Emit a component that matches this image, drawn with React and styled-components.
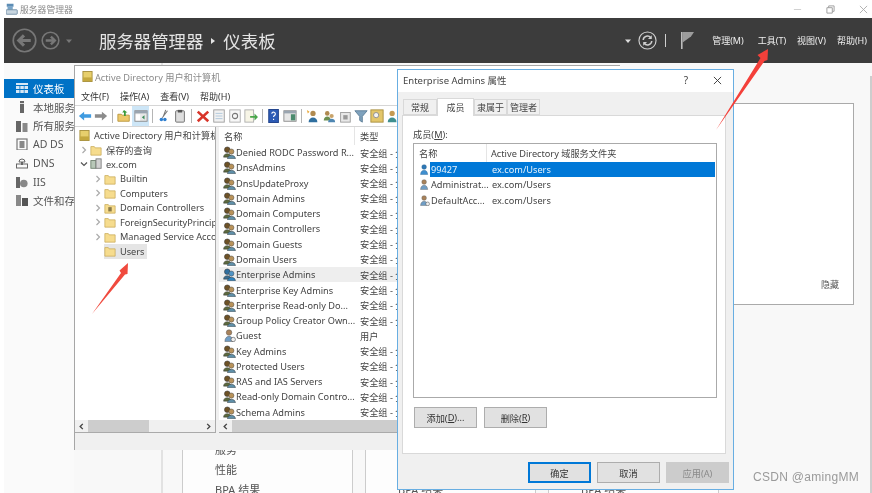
import React from 'react';
import styled, { createGlobalStyle } from 'styled-components';

const GlobalStyle = createGlobalStyle`
    html, body {
        margin: 0;
        padding: 0;
        background: #fff;
    }
    * {
        box-sizing: border-box;
    }
`;

const Page = styled.div`
    position: relative;
    width: 872px;
    height: 493px;
    overflow: hidden;
    background: #fff;
    color: #333;
    font-family: "Noto Sans", "Noto Sans CJK SC", sans-serif;
    font-size: 9.2px;
    filter: blur(0.45px);
`;

const TitleBar = styled.div`
    display: flex;
    align-items: center;
    height: 18px;
    padding: 0 4px 0 6px;
    color: #8a8a8a;
    font-size: 8.8px;
    gap: 2px;
`;

const WindowControls = styled.div`
    display: flex;
    align-items: center;
    margin-left: auto;
    gap: 24px;
`;

const Header = styled.div`
    display: flex;
    align-items: center;
    height: 45px;
    margin-left: 4px;
    padding: 0 5px 0 8px;
    background: #3c3c3c;
    color: #e6e6e6;
`;

const ForwardSlot = styled.span`
    display: flex;
    margin-left: 4px;
`;

const CaretSlot = styled.span`
    display: flex;
    margin-left: 6px;
`;

const HeaderTitle = styled.div`
    display: flex;
    align-items: center;
    margin-left: 27px;
    font-size: 17.4px;
    color: #e4e4e4;
`;

const TitleCaret = styled.span`
    width: 0;
    height: 0;
    margin: 0 8px;
    border-left: 4px solid #e4e4e4;
    border-top: 3px solid transparent;
    border-bottom: 3px solid transparent;
`;

const HeaderTools = styled.div`
    display: flex;
    align-items: center;
    margin-left: auto;
`;

const RefreshSlot = styled.span`
    display: flex;
    margin-left: 7px;
`;

const ToolSeparator = styled.span`
    width: 1px;
    height: 13px;
    margin: 0 14px 0 8px;
    background: #cfcfcf;
`;

const HeaderMenu = styled.div`
    display: flex;
    gap: 11px;
    margin-left: 15px;
    font-size: 9px;
    color: #eee;
`;

const HeaderMenuItem = styled.span`
    margin-right: ${props => props.$extra || 0}px;
`;

const Body = styled.div`
    display: flex;
    height: 430px;
    margin-left: 4px;
    background: #f8f8f8;
`;

const Sidebar = styled.nav`
    width: 70px;
    flex: none;
    padding-top: 16px;
    background: #fafafa;
    white-space: nowrap;
`;

const NavItem = styled.div`
    display: flex;
    align-items: center;
    height: 18.7px;
    padding-left: 12px;
    gap: 5px;
    font-size: 10.5px;
    background: ${props => (props.$active ? '#0072c6' : 'transparent')};
    color: ${props => (props.$active ? '#fff' : '#555')};
`;

const Main = styled.div`
    flex: 1;
    padding-left: 87px;
`;

const Content = styled.div`
    height: 100%;
    padding-top: 40px;
    border-left: 2px solid #e2e2e2;
`;

const WelcomePanel = styled.div`
    display: flex;
    justify-content: flex-end;
    align-items: flex-end;
    height: 202px;
    margin-right: 16px;
    padding: 0 14px 13px 0;
    background: #fff;
    border: 1px solid #aaa;
    font-size: 9px;
    color: #555;
`;

const TileRow = styled.div`
    display: flex;
    gap: 12px;
    margin-top: 125px;
    padding-left: 19px;
`;

const Tile = styled.div`
    width: 171px;
    height: 80px;
    padding: 10px 0 0 32px;
    background: #fdfdfd;
    border-left: 1px solid #ccc;
    border-right: 1px solid #ccc;
    font-size: 11px;
    line-height: 20px;
    color: #555;
`;

const PageScroll = styled.div`
    width: 2px;
    flex: none;
    margin-top: 13px;
    background: #cdcdcd;
`;

// floating windows
const AdWindow = styled.div`
    position: absolute;
    left: 74px;
    top: 65px;
    width: 546px;
    height: 385px;
    display: flex;
    flex-direction: column;
    background: #f0f0f0;
    border-top: 1px solid #a6a6a6;
    border-left: 1px solid #a6a6a6;
`;

const AdTitle = styled.div`
    display: flex;
    align-items: center;
    height: 21px;
    flex: none;
    padding-left: 7px;
    gap: 2px;
    background: #fff;
    color: #8a8a8a;
    font-size: 9.2px;
`;

const AdMenu = styled.div`
    display: flex;
    align-items: center;
    height: 18px;
    flex: none;
    padding-left: 6px;
    gap: 11px;
    background: #fff;
    font-size: 9px;
    color: #333;
`;

const Toolbar = styled.div`
    display: flex;
    align-items: center;
    height: 22px;
    flex: none;
    padding-left: 2px;
    background: #fff;
    border-top: 1px solid #d6d6d6;
    border-bottom: 1px solid #d6d6d6;
`;

const ToolButton = styled.span`
    display: flex;
    align-items: center;
    justify-content: center;
    width: ${props => (props.$active ? '17px' : '16px')};
    height: 20px;
    flex: none;
    background: ${props => (props.$active ? '#cde6f7' : 'transparent')};
`;

const ToolGap = styled.span`
    width: 1px;
    height: 14px;
    flex: none;
    margin: 0 3px;
    background: #b5b5b5;
`;

const Panes = styled.div`
    display: flex;
    height: 306px;
    flex: none;
    gap: 3px;
    background: #f0f0f0;
`;

const Pane = styled.div`
    display: flex;
    flex-direction: column;
    width: ${props => props.$width};
    flex: ${props => (props.$width ? 'none' : 1)};
    background: #fff;
    border-right: 1px solid #aaa;
    border-bottom: 1px solid #aaa;
    overflow: hidden;
`;

const PaneBody = styled.div`
    flex: 1;
    overflow: hidden;
    white-space: nowrap;
    padding-top: ${props => props.$top || 0}px;
`;

const TreeRow = styled.div`
    display: flex;
    align-items: center;
    height: 14.5px;
    padding-left: ${props => props.$indent}px;
    color: #444;
`;

const TreeChevron = styled.span`
    display: flex;
    width: 12px;
    flex: none;
    justify-content: center;
`;

const TreeLabel = styled.span`
    display: flex;
    align-items: center;
    height: 14.5px;
    gap: 4px;
    padding: 0 2px 0 0;
    background: ${props => (props.$selected ? '#e5e5e5' : 'transparent')};
`;

const ListHeader = styled.div`
    display: flex;
    align-items: center;
    height: 18px;
    flex: none;
    color: #444;
`;

const ListHeadCell = styled.span`
    display: flex;
    align-items: center;
    height: 18px;
    width: ${props => props.$width};
    padding-left: 5px;
    border-right: ${props => (props.$line ? '1px solid #e5e5e5' : 'none')};
`;

const ListRow = styled.div`
    display: flex;
    align-items: center;
    height: 15.27px;
    background: ${props => (props.$hover ? '#eeeeee' : 'transparent')};
    color: #444;
`;

const NameCell = styled.span`
    display: flex;
    align-items: center;
    width: 136px;
    flex: none;
    padding-left: 4px;
`;

const TypeCell = styled.span`
    padding-left: 5px;
`;

const ScrollTrack = styled.div`
    display: flex;
    align-items: center;
    height: 12px;
    flex: none;
    background: #f0f0f0;
`;

const ScrollArrow = styled.span`
    display: flex;
    justify-content: center;
    width: 13px;
    flex: none;
`;

const ScrollThumb = styled.span`
    height: 12px;
    background: #cdcdcd;
    flex: ${props => (props.$grow ? 1 : 'none')};
    width: ${props => props.$width};
`;

const ScrollSpace = styled.span`
    flex: 1;
`;

const Dialog = styled.div`
    position: absolute;
    left: 397px;
    top: 69px;
    width: 337px;
    height: 421px;
    display: flex;
    flex-direction: column;
    background: #f0f0f0;
    border: 1px solid #68aee2;
`;

const DialogTitle = styled.div`
    display: flex;
    align-items: center;
    height: 22px;
    flex: none;
    padding: 0 11px 2px 5px;
    background: #fff;
    font-size: 9.5px;
    color: #444;
`;

const DialogHelp = styled.span`
    margin-left: auto;
    margin-right: 25px;
    font-size: 10px;
`;

const TabStrip = styled.div`
    display: flex;
    align-items: flex-end;
    height: 23px;
    flex: none;
    padding-left: 5px;
`;

const Tab = styled.div`
    display: flex;
    align-items: center;
    justify-content: center;
    width: ${props => props.$width}px;
    height: ${props => (props.$active ? 18 : 16)}px;
    margin-bottom: ${props => (props.$active ? -1 : 0)}px;
    position: relative;
    background: ${props => (props.$active ? '#fff' : '#f0f0f0')};
    border: 1px solid #d9d9d9;
    border-bottom: ${props => (props.$active ? 'none' : '1px solid #d9d9d9')};
    font-size: 9px;
    color: #444;
`;

const TabPage = styled.div`
    display: flex;
    flex-direction: column;
    height: 339px;
    flex: none;
    margin: 0 7px 0 4px;
    padding: 11px 8px 0 10px;
    background: #fff;
    border: 1px solid #d9d9d9;
`;

const FieldLabel = styled.div`
    height: 16px;
    font-size: 9.2px;
    color: #444;
`;

const MemberList = styled.div`
    height: 255px;
    flex: none;
    padding: 0 1px;
    background: #fff;
    border: 1px solid #aaa;
    color: #444;
`;

const MemberHeader = styled.div`
    display: flex;
    align-items: center;
    height: 18px;
`;

const MemberHeadCell = styled.span`
    display: flex;
    align-items: center;
    height: 18px;
    width: ${props => props.$width};
    padding-left: ${props => props.$pad}px;
    border-right: ${props => (props.$line ? '1px solid #e5e5e5' : 'none')};
`;

const MemberRow = styled.div`
    display: flex;
    align-items: center;
    height: 15.3px;
    padding-left: 4px;
`;

const MemberName = styled.span`
    display: flex;
    align-items: center;
    width: 68px;
    flex: none;
    height: 15.3px;
`;

const MemberText = styled.span`
    display: flex;
    align-items: center;
    flex: ${props => (props.$selected ? 1 : 'none')};
    height: 15.3px;
    padding-left: 1px;
    background: ${props => (props.$selected ? '#0078d7' : 'transparent')};
    color: ${props => (props.$selected ? '#e6f2fb' : '#444')};
`;

const MemberPath = styled.span`
    display: flex;
    align-items: center;
    flex: 1;
    height: 15.3px;
    padding-left: 5px;
    background: ${props => (props.$selected ? '#0078d7' : 'transparent')};
    color: ${props => (props.$selected ? '#e6f2fb' : '#444')};
`;

const ButtonRow = styled.div`
    display: flex;
    gap: 7px;
    margin-top: 9px;
    padding-left: 1px;
`;

const Button = styled.div`
    display: flex;
    align-items: center;
    justify-content: center;
    width: 63px;
    height: 21px;
    background: ${props => (props.$disabled ? '#cccccc' : '#e1e1e1')};
    border: 1px solid ${props => (props.$primary ? '#0078d7' : props.$disabled ? '#cccccc' : '#adadad')};
    box-shadow: ${props => (props.$primary ? 'inset 0 0 0 1px #0078d7' : 'none')};
    font-size: 9.2px;
    color: ${props => (props.$disabled ? '#8a8a8a' : '#333')};
`;

const DialogFooter = styled.div`
    display: flex;
    justify-content: flex-end;
    gap: 6px;
    padding: 8px 4px 0 0;
`;

const Watermark = styled.div`
    position: absolute;
    left: 753px;
    top: 470px;
    font-family: "Liberation Sans", sans-serif;
    font-size: 12px;
    letter-spacing: 0.3px;
    color: #9a9a9a;
`;

const Arrow = styled.svg`
    position: absolute;
    left: ${props => props.$left}px;
    top: ${props => props.$top}px;
`;

// icons
const Svg = ({ size = 14, view = 16, children }) => (
    <svg width={size} height={size} viewBox={`0 0 ${view} ${view}`} style={{ flex: 'none', display: 'block' }}>
        {children}
    </svg>
);

const GroupIcon = ({ blue }) => (
    <Svg size={13} view={14}>
        <circle cx="4.6" cy="4" r="3" fill={blue ? '#2f6f9f' : '#6e5226'} stroke="#333" strokeWidth=".6" />
        <path d="M.6 12c0-5 8-5 8 0z" fill={blue ? '#3a6d8f' : '#5c6a3e'} stroke="#333" strokeWidth=".5" />
        <circle cx="9" cy="6" r="2.8" fill={blue ? '#4f93c4' : '#b8925a'} stroke="#444" strokeWidth=".5" />
        <path d="M4.8 13.8c0-5 8.6-5 8.6 0z" fill={blue ? '#2d82bf' : '#5f8fa8'} stroke="#333" strokeWidth=".5" />
    </Svg>
);

const UserIcon = ({ blue, badge, size = 13 }) => (
    <Svg size={size} view={14}>
        <circle cx="6.5" cy="3.8" r="3" fill={blue ? '#2e78b5' : '#a8825a'} stroke={blue ? '#1f5a8c' : '#555'} strokeWidth=".5" />
        <path d="M2 13.5c0-7.5 9-7.5 9 0z" fill={blue ? '#3f8fcf' : '#6f9dc5'} stroke={blue ? '#1f5a8c' : '#555'} strokeWidth=".5" />
        {badge && <circle cx="11" cy="11.3" r="2.4" fill="#eee" stroke="#444" strokeWidth=".6" />}
    </Svg>
);

const FolderIcon = ({ doc }) => (
    <Svg size={12} view={14}>
        <path d="M1 3h4l1 1.5h7V13H1z" fill="#f6dc8e" stroke="#c5a552" strokeWidth=".8" />
        {doc && <rect x="5" y="6" width="4" height="5" fill="#8a7b4a" />}
    </Svg>
);

const AdIcon = () => (
    <Svg size={11} view={12}>
        <rect x="1" y="0.5" width="10" height="11" fill="#e7cf6c" stroke="#a68f3c" />
        <rect x="1" y="7" width="10" height="4" fill="#c4a83e" />
    </Svg>
);

const DomainIcon = () => (
    <Svg size={12} view={14}>
        <rect x="1" y="3" width="6" height="9" fill="#b8c8b8" stroke="#6b7d6b" />
        <rect x="7" y="1" width="6" height="11" fill="#d2d2d2" stroke="#7a7a7a" />
    </Svg>
);

const Chevron = ({ open, dark }) => (
    <Svg size={8} view={8}>
        <path
            d={open ? 'M1 2.5 4 5.5 7 2.5' : 'M2.5 1 5.5 4 2.5 7'}
            fill="none"
            stroke={dark || open ? '#555' : '#aaa'}
            strokeWidth="1.2"
        />
    </Svg>
);

const ScrollChevron = ({ left }) => (
    <Svg size={7} view={8}>
        <path d={left ? 'M5.5 1 2.5 4 5.5 7' : 'M2.5 1 5.5 4 2.5 7'} fill="none" stroke="#444" strokeWidth="1.6" />
    </Svg>
);

const BackCircle = () => (
    <Svg size={25} view={24}>
        <circle cx="12" cy="12" r="10.8" fill="none" stroke="#777" strokeWidth="1.6" />
        <path d="M18 12H7M11.5 7 6.5 12l5 5" fill="none" stroke="#777" strokeWidth="3" />
    </Svg>
);

const ForwardCircle = () => (
    <Svg size={19} view={24}>
        <circle cx="12" cy="12" r="10.5" fill="none" stroke="#777" strokeWidth="2" />
        <path d="M6 12h11M12.5 7l5 5-5 5" fill="none" stroke="#777" strokeWidth="3" />
    </Svg>
);

const DownCaret = ({ color }) => (
    <Svg size={6} view={6}>
        <path d="M0 1.5h6L3 5z" fill={color} />
    </Svg>
);

const RefreshIcon = () => (
    <Svg size={19} view={20}>
        <circle cx="10" cy="10" r="9" fill="none" stroke="#cfcfcf" strokeWidth="1.2" />
        <path d="M5.5 9.5a4.5 4.5 0 0 1 8-2.4M14.5 10.5a4.5 4.5 0 0 1-8 2.4" fill="none" stroke="#cfcfcf" strokeWidth="1.6" />
        <path d="M14.5 4.5v4h-4zM5.5 15.5v-4h4z" fill="#cfcfcf" />
    </Svg>
);

const FlagIcon = () => (
    <Svg size={17} view={17}>
        <path d="M1 0h1.6v17H1z" fill="#bdbdbd" />
        <path d="M2.6 0H14l-3 4.5-8.4 6z" fill="#9c9c9c" />
    </Svg>
);

const ServerAppIcon = () => (
    <Svg size={12} view={16}>
        <rect x="1" y="1" width="9" height="4" fill="#5d8db5" />
        <rect x="2" y="5" width="7" height="4" fill="#7aa6c9" />
        <rect x="0" y="9" width="15" height="6" rx="1" fill="#c8d6e0" stroke="#5d7d97" />
    </Svg>
);

const SideIcons = {
    dash: (
        <Svg size={12} view={12}>
            <path d="M0 1h12v2H0z M0 4h3.5v3H0z M4.3 4h3.5v3H4.3z M8.5 4H12v3H8.5z M0 8h3.5v3H0z M4.3 8h3.5v3H4.3z M8.5 8H12v3H8.5z" fill="#d8e8f5" />
        </Svg>
    ),
    local: (
        <Svg size={12} view={12}>
            <rect x="4" y="0" width="4" height="12" fill="#666" />
            <rect x="4" y="2" width="4" height="1" fill="#ddd" />
        </Svg>
    ),
    all: (
        <Svg size={12} view={12}>
            <rect x="0" y="1" width="5" height="11" fill="#666" />
            <rect x="6.5" y="3" width="5" height="9" fill="#888" />
        </Svg>
    ),
    ad: (
        <Svg size={12} view={12}>
            <rect x="1" y="1" width="10" height="11" fill="none" stroke="#777" strokeWidth="1.2" />
            <rect x="3.5" y="3" width="5" height="7" fill="#888" />
        </Svg>
    ),
    dns: (
        <Svg size={12} view={12}>
            <path d="M3 5a3 3 0 0 1 6 0z" fill="none" stroke="#666" />
            <rect x="0.5" y="7" width="11" height="4" fill="none" stroke="#666" />
            <rect x="5" y="5" width="2" height="3" fill="#666" />
        </Svg>
    ),
    iis: (
        <Svg size={12} view={12}>
            <rect x="0" y="1" width="4" height="11" fill="#666" />
            <circle cx="7.8" cy="7.5" r="3.8" fill="#888" />
        </Svg>
    ),
    file: (
        <Svg size={12} view={12}>
            <rect x="0" y="1" width="5" height="11" fill="#888" />
            <rect x="6" y="4" width="6" height="8" fill="#555" />
        </Svg>
    ),
};

const ToolIcons = [
    <Svg size={14} key="back"><path d="M1 8l6-5v3h8v4H7v3z" fill="#3f9be0" /></Svg>,
    <Svg size={14} key="fwd"><path d="M15 8L9 3v3H1v4h8v3z" fill="#8c8c8c" /></Svg>,
    'gap',
    <Svg size={14} key="up"><path d="M1 6h4l1 1h8v7H1z" fill="#edc96a" stroke="#b8953c" /><path d="M8 1l4 3h-2v4H8V4H6z" fill="#3b9b3b" /></Svg>,
    'active',
    'gap',
    <Svg size={14} key="cut"><path d="M10 1L7 9M12 2L6 10" stroke="#777" strokeWidth="1.2" /><circle cx="5" cy="12" r="2" fill="#2f7fd0" /><circle cx="9" cy="12" r="2" fill="#2f7fd0" /></Svg>,
    <Svg size={14} key="clip"><rect x="3" y="2" width="10" height="13" rx="1" fill="#dedede" stroke="#666" /><rect x="5.5" y="1" width="5" height="3" fill="#555" /></Svg>,
    'gap',
    <Svg size={14} key="del"><path d="M2 3l12 11M14 3L2 14" stroke="#d8352a" strokeWidth="3" /></Svg>,
    <Svg size={14} key="prop"><rect x="2" y="1" width="12" height="14" fill="#f2f2f2" stroke="#999" /><path d="M4 5h8M4 8h8M4 11h8" stroke="#a9c4d9" /></Svg>,
    <Svg size={14} key="ref"><rect x="2" y="1" width="12" height="14" fill="#f7f7f7" stroke="#aaa" /><circle cx="8" cy="8" r="3" fill="none" stroke="#777" strokeWidth="1.2" /></Svg>,
    <Svg size={14} key="exp"><rect x="1" y="1" width="10" height="14" fill="#f7f5e6" stroke="#aaa" /><path d="M7 8h5V5l4 4-4 4v-3H7z" fill="#49a649" /></Svg>,
    'gap',
    <Svg size={14} key="help"><rect x="2" y="0.5" width="11" height="15" fill="#2d5bb5" stroke="#173a85" /><path d="M5.5 5.5a2 2 0 1 1 3 1.8c-.7.4-1 .8-1 1.7M7.5 11v1.5" fill="none" stroke="#fff" strokeWidth="1.3" /></Svg>,
    <Svg size={14} key="mmc"><rect x="1" y="2" width="14" height="12" fill="#e7e7e7" stroke="#888" /><rect x="1" y="2" width="14" height="3" fill="#9aa5b0" /><rect x="9" y="6" width="5" height="7" fill="#4b8a6e" /></Svg>,
    'gap',
    <Svg size={14} key="u1"><circle cx="8" cy="5" r="3" fill="#b08a50" /><path d="M3 15c0-7 10-7 10 0z" fill="#2f6f9f" /><path d="M1 1l3 2-2 2z" fill="#e9a93a" /></Svg>,
    <Svg size={14} key="u2"><circle cx="6" cy="5" r="2.6" fill="#b08a50" /><path d="M2 13c0-6 8-6 8 0z" fill="#6b8f50" /><circle cx="11" cy="8" r="2.4" fill="#c9a36a" /><path d="M7 15c0-5 8-5 8 0z" fill="#4e86b2" /></Svg>,
    <Svg size={14} key="ou"><rect x="3" y="4" width="11" height="11" fill="#e8e8e8" stroke="#999" /><rect x="6" y="7" width="5" height="5" fill="#999" /></Svg>,
    <Svg size={14} key="filter"><path d="M1 2h14L9.5 8.5V15l-3-2V8.5z" fill="#7fa2bd" stroke="#5c7d96" /></Svg>,
    <Svg size={14} key="find"><rect x="1" y="1" width="14" height="14" fill="#e3c66a" stroke="#a58c3c" /><circle cx="7" cy="7" r="3" fill="#f4f4f4" stroke="#888" /></Svg>,
    <Svg size={14} key="last"><circle cx="7" cy="5" r="3" fill="#c59a52" /><path d="M2 15c0-7 10-7 10 0z" fill="#3f8f8f" /></Svg>,
];

const MmcActiveIcon = () => (
    <Svg size={14}>
        <rect x="1" y="2" width="14" height="12" fill="#e7e7e7" stroke="#888" />
        <rect x="1" y="2" width="14" height="3" fill="#9aa5b0" />
        <rect x="2" y="6" width="5" height="7" fill="#fff" />
        <path d="M9 9.5l3-2.5v5z" fill="#3b8b5b" />
    </Svg>
);

const sideItems = [
    { icon: 'dash', label: '仪表板', active: true },
    { icon: 'local', label: '本地服务器' },
    { icon: 'all', label: '所有服务器' },
    { icon: 'ad', label: 'AD DS' },
    { icon: 'dns', label: 'DNS' },
    { icon: 'iis', label: 'IIS' },
    { icon: 'file', label: '文件和存储服务' },
];

const treeChildren = [
    { label: 'Builtin' },
    { label: 'Computers' },
    { label: 'Domain Controllers', doc: true },
    { label: 'ForeignSecurityPrincipals' },
    { label: 'Managed Service Accounts' },
    { label: 'Users', leaf: true, selected: true },
];

const listRows = [
    { name: 'Denied RODC Password R...' },
    { name: 'DnsAdmins' },
    { name: 'DnsUpdateProxy' },
    { name: 'Domain Admins' },
    { name: 'Domain Computers' },
    { name: 'Domain Controllers' },
    { name: 'Domain Guests' },
    { name: 'Domain Users' },
    { name: 'Enterprise Admins', hover: true },
    { name: 'Enterprise Key Admins' },
    { name: 'Enterprise Read-only Do...' },
    { name: 'Group Policy Creator Own...' },
    { name: 'Guest', user: true },
    { name: 'Key Admins' },
    { name: 'Protected Users' },
    { name: 'RAS and IAS Servers' },
    { name: 'Read-only Domain Contro...' },
    { name: 'Schema Admins' },
];

const members = [
    { name: '99427', selected: true },
    { name: 'Administrat...' },
    { name: 'DefaultAcc...', badge: true },
];

const ScrollBar = ({ thumb, fill }) => (
    <ScrollTrack>
        <ScrollArrow><ScrollChevron left /></ScrollArrow>
        <ScrollThumb $width={thumb} $grow={fill} />
        {!fill && <ScrollSpace />}
        {!fill && <ScrollArrow><ScrollChevron /></ScrollArrow>}
    </ScrollTrack>
);

const App = () => (
    <Page>
        <GlobalStyle />
        <TitleBar>
            <ServerAppIcon />
            服务器管理器
            <WindowControls>
                <Svg size={9} view={10}><path d="M1 5h8" stroke="#ccc" /></Svg>
                <Svg size={9} view={10}><path d="M1 3h6v6H1zM3 3V1h6v6H7" fill="none" stroke="#999" /></Svg>
                <Svg size={9} view={10}><path d="M1 1l8 8M9 1L1 9" stroke="#aaa" /></Svg>
            </WindowControls>
        </TitleBar>

        <Header>
            <BackCircle />
            <ForwardSlot><ForwardCircle /></ForwardSlot>
            <CaretSlot><DownCaret color="#777" /></CaretSlot>
            <HeaderTitle>
                服务器管理器
                <TitleCaret />
                仪表板
            </HeaderTitle>
            <HeaderTools>
                <DownCaret color="#ddd" />
                <RefreshSlot><RefreshIcon /></RefreshSlot>
                <ToolSeparator />
                <FlagIcon />
                <HeaderMenu>
                    <HeaderMenuItem $extra={3}>管理(M)</HeaderMenuItem>
                    <HeaderMenuItem>工具(T)</HeaderMenuItem>
                    <HeaderMenuItem>视图(V)</HeaderMenuItem>
                    <HeaderMenuItem>帮助(H)</HeaderMenuItem>
                </HeaderMenu>
            </HeaderTools>
        </Header>

        <Body>
            <Sidebar>
                {sideItems.map(item => (
                    <NavItem key={item.label} $active={item.active}>
                        {SideIcons[item.icon]}
                        <span>{item.label}</span>
                    </NavItem>
                ))}
            </Sidebar>
            <Main>
                <Content>
                    <WelcomePanel>隐藏</WelcomePanel>
                    <TileRow>
                        <Tile>服务<br />性能<br />BPA 结果</Tile>
                        <Tile>服务<br />性能<br />BPA 结果</Tile>
                        <Tile>服务<br />性能<br />BPA 结果</Tile>
                    </TileRow>
                </Content>
            </Main>
            <PageScroll />
        </Body>

        <AdWindow>
            <AdTitle>
                <AdIcon />
                Active Directory 用户和计算机
            </AdTitle>
            <AdMenu>
                <span>文件(F)</span>
                <span>操作(A)</span>
                <span>查看(V)</span>
                <span>帮助(H)</span>
            </AdMenu>
            <Toolbar>
                {ToolIcons.map((icon, i) => {
                    if (icon === 'gap') return <ToolGap key={i} />;
                    if (icon === 'active') return <ToolButton key={i} $active><MmcActiveIcon /></ToolButton>;
                    return <ToolButton key={i}>{icon}</ToolButton>;
                })}
            </Toolbar>
            <Panes>
                <Pane $width="141px">
                    <PaneBody $top={1}>
                        <TreeRow $indent={4}>
                            <TreeLabel><AdIcon />Active Directory 用户和计算机</TreeLabel>
                        </TreeRow>
                        <TreeRow $indent={3}>
                            <TreeChevron><Chevron /></TreeChevron>
                            <TreeLabel><FolderIcon />保存的查询</TreeLabel>
                        </TreeRow>
                        <TreeRow $indent={3}>
                            <TreeChevron><Chevron open /></TreeChevron>
                            <TreeLabel><DomainIcon />ex.com</TreeLabel>
                        </TreeRow>
                        {treeChildren.map(node => (
                            <TreeRow key={node.label} $indent={17}>
                                <TreeChevron>{!node.leaf && <Chevron />}</TreeChevron>
                                <TreeLabel $selected={node.selected}>
                                    <FolderIcon doc={node.doc} />
                                    {node.label}
                                </TreeLabel>
                            </TreeRow>
                        ))}
                    </PaneBody>
                    <ScrollBar thumb="61px" />
                </Pane>
                <Pane>
                    <ListHeader>
                        <ListHeadCell $width="136px" $line>名称</ListHeadCell>
                        <ListHeadCell>类型</ListHeadCell>
                    </ListHeader>
                    <PaneBody>
                        {listRows.map(row => (
                            <ListRow key={row.name} $hover={row.hover}>
                                <NameCell>
                                    {row.user ? <UserIcon badge /> : <GroupIcon blue={row.hover} />}
                                    {row.name}
                                </NameCell>
                                <TypeCell>{row.user ? '用户' : '安全组 - 全局'}</TypeCell>
                            </ListRow>
                        ))}
                    </PaneBody>
                    <ScrollBar fill />
                </Pane>
            </Panes>
        </AdWindow>

        <Dialog>
            <DialogTitle>
                Enterprise Admins 属性
                <DialogHelp>?</DialogHelp>
                <Svg size={9} view={10}><path d="M1 1l8 8M9 1L1 9" stroke="#333" strokeWidth="1" /></Svg>
            </DialogTitle>
            <TabStrip>
                <Tab $width={34}>常规</Tab>
                <Tab $width={37} $active>成员</Tab>
                <Tab $width={33}>隶属于</Tab>
                <Tab $width={33}>管理者</Tab>
            </TabStrip>
            <TabPage>
                <FieldLabel>成员(<u>M</u>):</FieldLabel>
                <MemberList>
                    <MemberHeader>
                        <MemberHeadCell $width="72px" $pad={4} $line>名称</MemberHeadCell>
                        <MemberHeadCell $pad={4}>Active Directory 域服务文件夹</MemberHeadCell>
                    </MemberHeader>
                    {members.map(member => (
                        <MemberRow key={member.name}>
                            <MemberName>
                                <UserIcon size={11} blue={member.selected} badge={member.badge} />
                                <MemberText $selected={member.selected}>{member.name}</MemberText>
                            </MemberName>
                            <MemberPath $selected={member.selected}>ex.com/Users</MemberPath>
                        </MemberRow>
                    ))}
                </MemberList>
                <ButtonRow>
                    <Button>添加(<u>D</u>)...</Button>
                    <Button>删除(<u>R</u>)</Button>
                </ButtonRow>
            </TabPage>
            <DialogFooter>
                <Button $primary>确定</Button>
                <Button>取消</Button>
                <Button $disabled>应用(A)</Button>
            </DialogFooter>
        </Dialog>

        <Arrow $left={88} $top={260} width="44" height="58" viewBox="0 0 44 58">
            <path d="M4 54 L33 13 L31.5 10.5 L40 3 L39.5 14 L37 14.5 Z" fill="#f04a3e" />
        </Arrow>
        <Arrow $left={712} $top={44} width="62" height="90" viewBox="0 0 62 90">
            <path d="M4 86 L48.5 14 L45.5 11 L56 5 L55.5 16 L52.5 17 Z" fill="#f4403a" />
        </Arrow>

        <Watermark>CSDN @amingMM</Watermark>
    </Page>
);

export default App;
